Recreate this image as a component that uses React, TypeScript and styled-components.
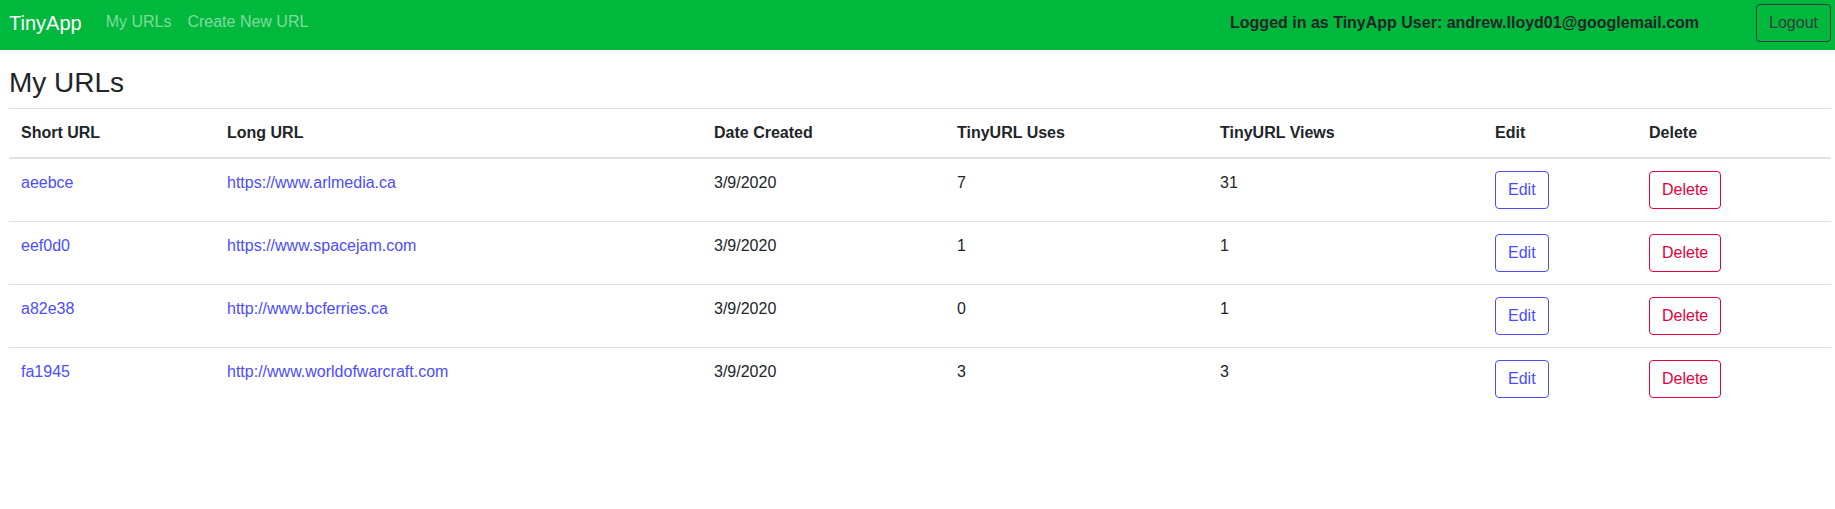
import React from "react";
import styled, { createGlobalStyle } from "styled-components";

const GlobalStyle = createGlobalStyle`
  html, body {
    margin: 0;
    padding: 0;
    background: #ffffff;
    font-family: "Liberation Sans", Arial, sans-serif;
    font-size: 16px;
    color: #212529;
  }
  * { box-sizing: border-box; }
`;

const Navbar = styled.nav`
  display: flex;
  align-items: flex-start;
  height: 50px;
  padding: 4px 4px 0 9px;
  background: #00b83c;
`;

const Brand = styled.a`
  font-size: 20px;
  line-height: 30px;
  padding-top: 4px;
  margin-right: 16px;
  color: #ffffff;
  text-decoration: none;
`;

const NavList = styled.div`
  display: flex;
`;

const NavLink = styled.a`
  font-size: 16px;
  line-height: 24px;
  padding: 6px 8px 0;
  color: rgba(255, 255, 255, 0.5);
  text-decoration: none;
`;

const NavRight = styled.div`
  margin-left: auto;
  display: flex;
  align-items: flex-start;
  gap: 57px;
`;

const NavText = styled.span`
  font-weight: bold;
  font-size: 16px;
  line-height: 24px;
  padding-top: 7px;
  color: #212529;
`;

const Button = styled.button<{ $tone: string }>`
  font-family: "Liberation Sans", Arial, sans-serif;
  font-size: 16px;
  line-height: 24px;
  padding: 6px 12px;
  height: 38px;
  border: 1px solid ${(p) => p.$tone};
  border-radius: 4px;
  color: ${(p) => p.$tone};
  background: transparent;
  cursor: pointer;
`;

const Main = styled.main`
  padding: 16px 4px 0 9px;
`;

const Title = styled.h3`
  margin: 0 0 8px;
  font-size: 28px;
  font-weight: 500;
  line-height: 1.2;
  color: #212529;
`;

const Table = styled.table`
  width: 1822px;
  border-collapse: collapse;
  table-layout: fixed;
`;

const Th = styled.th`
  text-align: left;
  font-weight: bold;
  font-size: 16px;
  line-height: 24px;
  padding: 12px;
  vertical-align: bottom;
  border-top: 1px solid #dee2e6;
  border-bottom: 2px solid #dee2e6;
`;

const Td = styled.td`
  font-size: 16px;
  line-height: 24px;
  padding: 12px;
  vertical-align: top;
  border-top: 1px solid #dee2e6;
`;

const Row = styled.tr`
  &:first-child td {
    border-top: none;
  }
`;

const Link = styled.a`
  color: #4c4cff;
  text-decoration: none;
`;

const widths = [206, 487, 243, 263, 275, 154, 194];
const headers = [
  "Short URL",
  "Long URL",
  "Date Created",
  "TinyURL Uses",
  "TinyURL Views",
  "Edit",
  "Delete",
];

const rows = [
  { id: "aeebce", url: "https://www.arlmedia.ca", date: "3/9/2020", uses: 7, views: 31 },
  { id: "eef0d0", url: "https://www.spacejam.com", date: "3/9/2020", uses: 1, views: 1 },
  { id: "a82e38", url: "http://www.bcferries.ca", date: "3/9/2020", uses: 0, views: 1 },
  { id: "fa1945", url: "http://www.worldofwarcraft.com", date: "3/9/2020", uses: 3, views: 3 },
];

export default function App() {
  return (
    <>
      <GlobalStyle />
      <Navbar>
        <Brand href="#">TinyApp</Brand>
        <NavList>
          <NavLink href="#">My URLs</NavLink>
          <NavLink href="#">Create New URL</NavLink>
        </NavList>
        <NavRight>
          <NavText>Logged in as TinyApp User: andrew.lloyd01@googlemail.com</NavText>
          <Button $tone="#343a40">Logout</Button>
        </NavRight>
      </Navbar>
      <Main>
        <Title>My URLs</Title>
        <Table>
          <colgroup>
            {widths.map((w, i) => (
              <col key={i} style={{ width: w }} />
            ))}
          </colgroup>
          <thead>
            <tr>
              {headers.map((h) => (
                <Th key={h}>{h}</Th>
              ))}
            </tr>
          </thead>
          <tbody>
            {rows.map((r) => (
              <Row key={r.id}>
                <Td>
                  <Link href="#">{r.id}</Link>
                </Td>
                <Td>
                  <Link href="#">{r.url}</Link>
                </Td>
                <Td>{r.date}</Td>
                <Td>{r.uses}</Td>
                <Td>{r.views}</Td>
                <Td>
                  <Button $tone="#4c4cff">Edit</Button>
                </Td>
                <Td>
                  <Button $tone="#e6003d">Delete</Button>
                </Td>
              </Row>
            ))}
          </tbody>
        </Table>
      </Main>
    </>
  );
}
